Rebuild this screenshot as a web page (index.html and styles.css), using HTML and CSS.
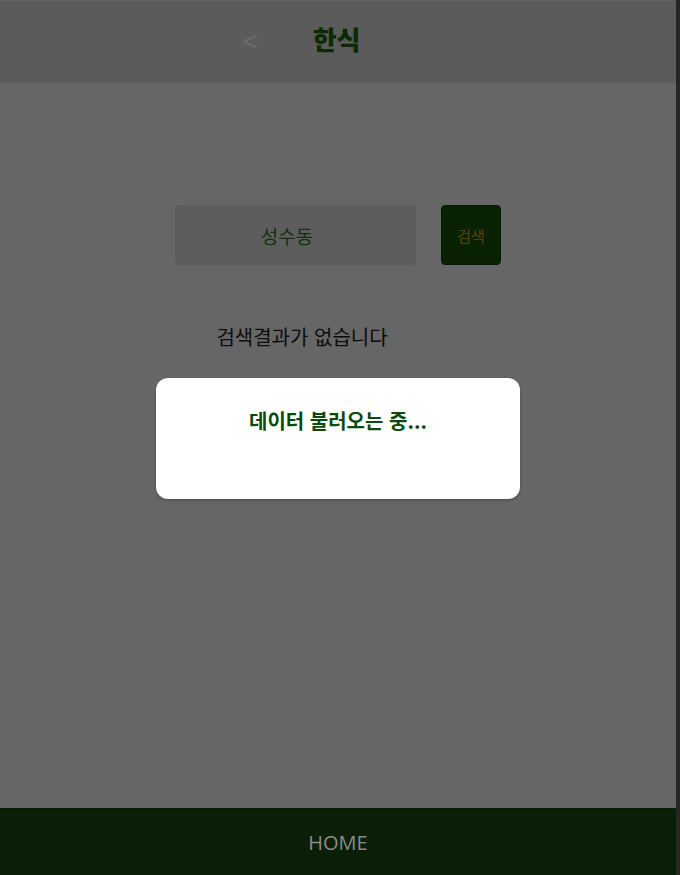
FILE: index.html
```html
<!DOCTYPE html>
<html lang="ko">
<head>
<meta charset="utf-8">
<title>한식</title>
<link rel="stylesheet" href="styles.css">
</head>
<body>
<div class="app">
  <header class="topbar">
    <span class="back">&lt;</span>
    <h1 class="title">한식</h1>
  </header>
  <main class="content">
    <div class="search-row">
      <div class="search-input">성수동</div>
      <button class="search-btn">검색</button>
    </div>
    <p class="empty">검색결과가 없습니다</p>
    <div class="backdrop">
      <div class="modal">
        <p class="modal-text">데이터 불러오는 중...</p>
      </div>
    </div>
  </main>
  <footer class="bottombar">
    <span class="home">HOME</span>
  </footer>
</div>
</body>
</html>
```
FILE: styles.css
```css
html, body {
  margin: 0;
  padding: 0;
  height: 100%;
  background: #262626;
}
body {
  font-family: "Noto Sans CJK KR", "Noto Sans", sans-serif;
}
.app {
  width: 676px;
  height: 875px;
  display: flex;
  flex-direction: column;
  background: #ffffff;
}
.topbar {
  height: 82px;
  flex: none;
  background: #5b5b5b;
  border-top: 1px solid #636363;
  display: flex;
  align-items: center;
  justify-content: center;
  padding-right: 73px;
  gap: 55px;
  box-sizing: content-box;
}
.back {
  font-family: "Liberation Sans", sans-serif;
  font-size: 26px;
  color: #6c6c6c;
  line-height: 1;
  margin-top: -2px;
}
.title {
  margin: 0;
  font-size: 26px;
  font-weight: 900;
  color: #0c2a06;
  line-height: 1;
  margin-top: -6px;
}
.content {
  flex: 1;
  position: relative;
  display: flex;
  flex-direction: column;
  align-items: center;
  padding-top: 122px;
}
.search-row {
  display: flex;
  gap: 25px;
}
.search-input {
  width: 241px;
  height: 60px;
  background: #e8e8e8;
  border-radius: 4px;
  display: flex;
  align-items: center;
  justify-content: center;
  padding-right: 17px;
  box-sizing: border-box;
  font-size: 19px;
  color: #3a7a2a;
}
.search-btn {
  width: 60px;
  height: 60px;
  background: #19550a;
  border: 1px solid #123f08;
  border-radius: 4px;
  color: #daa520;
  font-family: "Noto Sans CJK KR", sans-serif;
  font-size: 15px;
  padding: 0;
}
.empty {
  margin: 58px 0 0;
  padding-right: 72px;
  font-size: 20px;
  line-height: 28px;
  color: #222222;
}
.backdrop {
  position: absolute;
  inset: 0;
  background: rgba(0, 0, 0, 0.6);
  display: flex;
  justify-content: center;
  align-items: flex-start;
  padding-top: 295px;
  box-sizing: border-box;
}
.modal {
  width: 364px;
  height: 121px;
  background: #ffffff;
  border-radius: 12px;
  box-shadow: 0 1px 3px rgba(0, 0, 0, 0.3);
  display: flex;
  justify-content: center;
}
.modal-text {
  margin: 29px 0 0;
  font-size: 20px;
  font-weight: 700;
  line-height: 28px;
  color: #0b4a0b;
}
.bottombar {
  height: 67px;
  flex: none;
  background: #0b1f07;
  border-top: 1px solid #081704;
  box-sizing: border-box;
  display: flex;
  align-items: center;
  justify-content: center;
}
.home {
  font-family: "Open Sans", sans-serif;
  font-size: 20px;
  color: #8a8a8a;
}
```
